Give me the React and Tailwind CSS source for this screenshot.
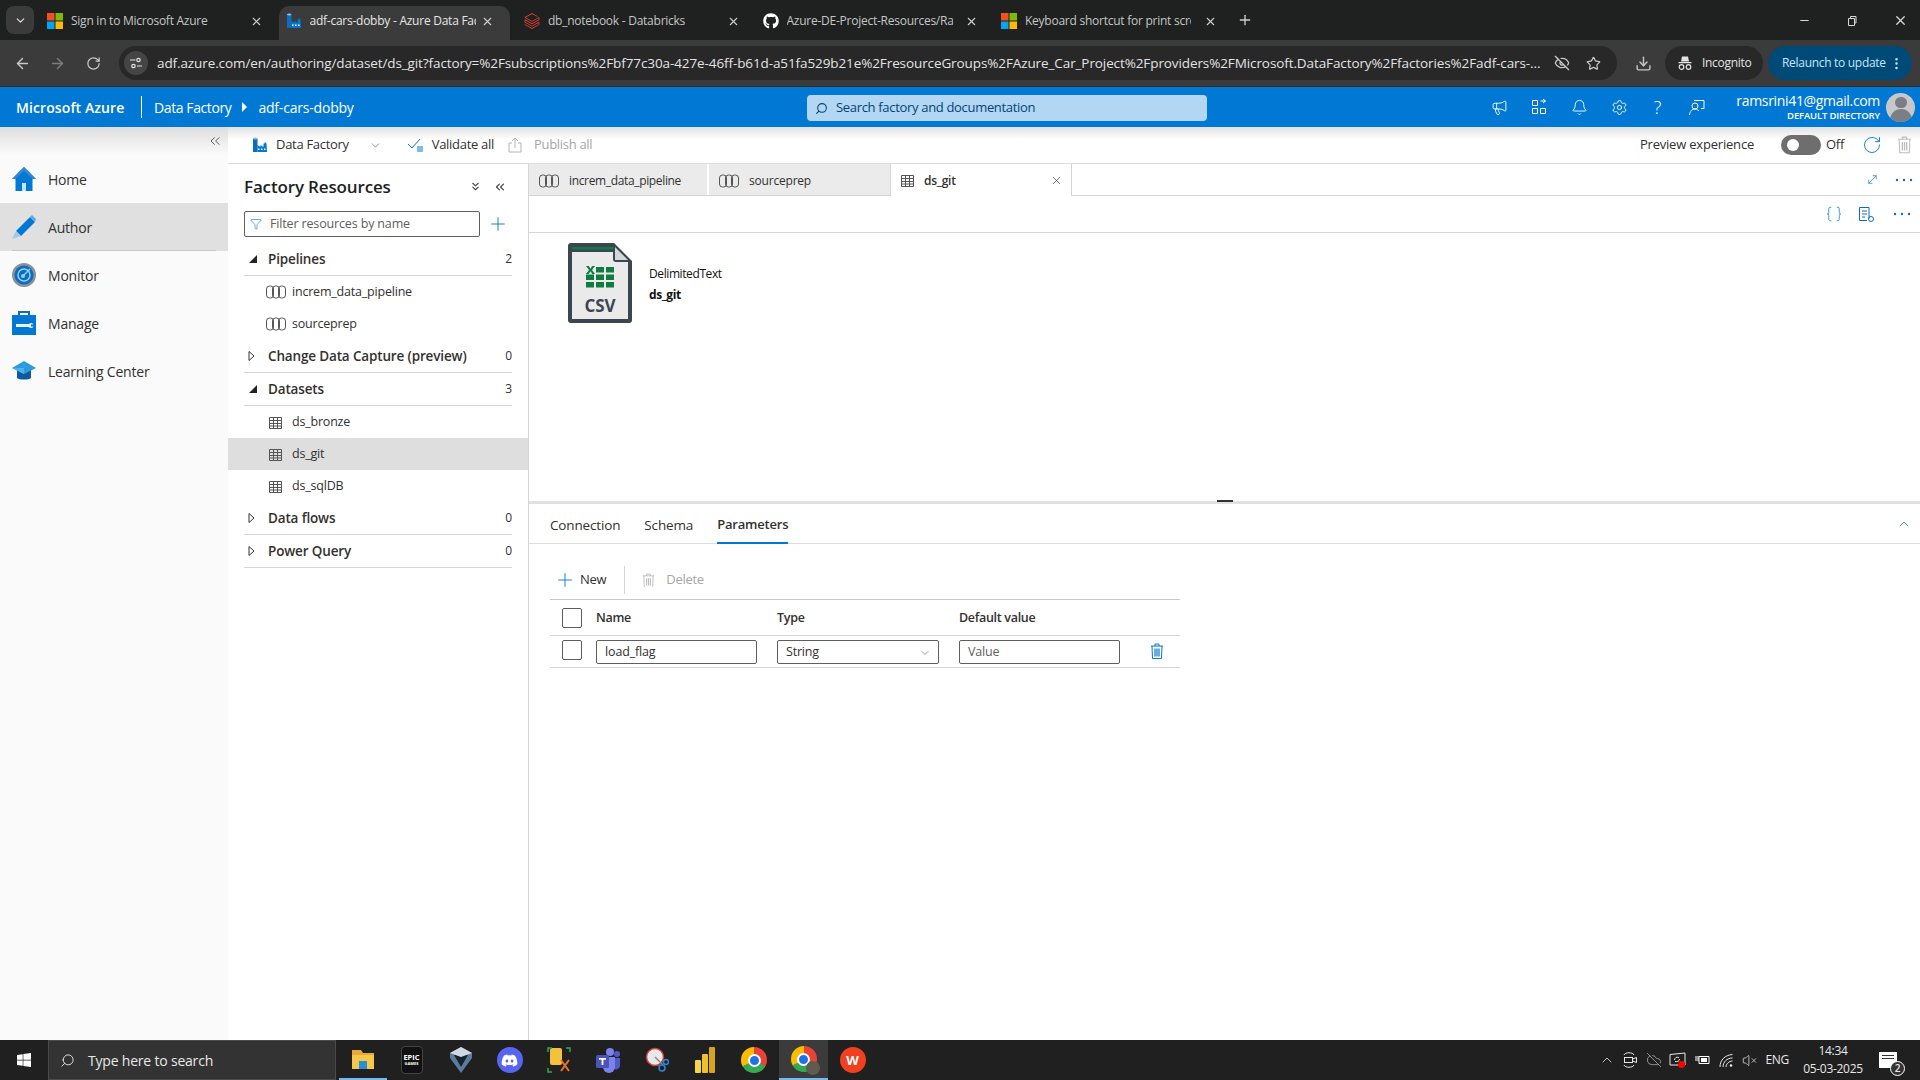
import { ArrowLeft, ArrowRight, RotateCw, EyeOff, Star, Download, Plus, X, Minus, ChevronDown, ChevronUp, ChevronsLeft, ChevronsDown, Bell, Settings, Megaphone, Filter, MoveDiagonal, EllipsisVertical, Search, Braces, VolumeX, CloudOff } from "lucide-react";
import { FaGithub, FaDiscord, FaWindows } from "react-icons/fa";
import { SiDatabricks } from "react-icons/si";

const ui = "font-['Open_Sans','Noto_Sans',sans-serif]";

function MsLogo() {
  return (
    <svg width="16" height="16" viewBox="0 0 16 16" className="shrink-0">
      <rect width="7.5" height="7.5" fill="#f25022" />
      <rect x="8.5" width="7.5" height="7.5" fill="#7fba00" />
      <rect y="8.5" width="7.5" height="7.5" fill="#00a4ef" />
      <rect x="8.5" y="8.5" width="7.5" height="7.5" fill="#ffb900" />
    </svg>
  );
}

function FactoryIcon({ size = 16 }) {
  return (
    <svg width={size} height={size} viewBox="0 0 16 16" className="shrink-0">
      <rect x="1" y="1.5" width="4.5" height="13.5" fill="#0f6cbd" />
      <ellipse cx="3.2" cy="1.6" rx="2.2" ry="1" fill="#7fc4ee" />
      <path d="M5.5 15V8l3 2V8l3 2V6.5h1L13 5l1.5 1.5L15 15z" fill="#0078d4" />
      <rect x="6" y="11.5" width="1.5" height="1.5" fill="#fff" />
      <rect x="9" y="11.5" width="1.5" height="1.5" fill="#fff" />
      <rect x="12" y="11.5" width="1.5" height="1.5" fill="#fff" />
    </svg>
  );
}

function Dots({ className = "" }) {
  return (
    <svg width="18" height="4" viewBox="0 0 18 4" fill="#0f6cbd" className={`shrink-0 ${className}`}>
      <circle cx="2" cy="2" r="1.200" />
      <circle cx="9" cy="2" r="1.200" />
      <circle cx="16" cy="2" r="1.200" />
    </svg>
  );
}

function ChromeTab({ icon, title, active }) {
  return (
    <div className={`h-[34px] shrink-0 flex items-center pl-[7px] pr-[16px] pb-[4px] rounded-t-[10px] ${active ? "bg-[#3b3b3b] w-[231px] mr-[7.5px]" : "w-[238.5px]"}`}>
      <div className="w-4 h-4 flex items-center justify-center shrink-0">{icon}</div>
      <span className={`ml-2 text-[12px] leading-4 w-[166px] overflow-hidden whitespace-nowrap tracking-[-0.25px] ${active ? "text-[#e6e6e6]" : "text-[#c4c7c5]"}`}>{title}</span>
      <X size={13} className="ml-auto text-[#d0d0d0]" />
    </div>
  );
}

function TabStrip() {
  return (
    <div className="h-10 bg-[#1f2020] flex items-end shrink-0">
      <div className="w-[28px] h-[28px] ml-[6px] mr-[6px] mb-[6px] rounded-lg bg-[#3b3b3b] flex items-center justify-center">
        <ChevronDown size={13} className="text-[#e3e3e3]" />
      </div>
      <ChromeTab icon={<MsLogo />} title="Sign in to Microsoft Azure" />
      <ChromeTab icon={<FactoryIcon />} title="adf-cars-dobby - Azure Data Factory" active />
      <ChromeTab icon={<SiDatabricks size={16} color="#e8432e" />} title="db_notebook - Databricks" />
      <ChromeTab icon={<FaGithub size={16} color="#fff" />} title="Azure-DE-Project-Resources/Raw" />
      <ChromeTab icon={<MsLogo />} title="Keyboard shortcut for print screen" />
      <Plus size={16} className="text-[#d0d0d0] mb-[12px] ml-[4px]" />
      <div className="ml-auto flex items-center mb-[12px] text-[#d8d8d8]">
        <Minus size={13} />
        <svg width="12" height="12" viewBox="0 0 12 12" className="ml-[35px]" fill="none" stroke="currentColor">
          <path d="M2.5 3.5h6v7h-6zM4.5 3.5v-2h5.5v6.500H8.500" />
        </svg>
        <X size={15} className="ml-[35px] mr-[12px]" />
      </div>
    </div>
  );
}

function Omnibox() {
  return (
    <div className="h-[47px] bg-[#3b3b3b] flex items-center shrink-0 border-b border-[#2d2d2d] text-[#c7c7c7]">
      <ArrowLeft size={17} className="ml-[14px]" />
      <ArrowRight size={17} className="ml-[18px] text-[#7e7e7e]" />
      <RotateCw size={15} className="ml-[20px]" />
      <div className="ml-[18px] w-[1498px] h-[34px] rounded-full bg-[#282828] flex items-center pl-[5px]">
        <div className="w-6 h-6 rounded-full bg-[#454545] flex items-center justify-center">
          <svg width="12" height="12" viewBox="0 0 12 12" fill="none" stroke="#e3e3e3" strokeWidth="1.200">
            <path d="M0 3h5.500M7 9h5" />
            <circle cx="8.500" cy="3" r="1.700" />
            <circle cx="3.500" cy="9" r="1.700" />
          </svg>
        </div>
        <span className="ml-[9px] w-[1383px] overflow-hidden whitespace-nowrap text-[13.5px] tracking-[-0.1px] text-[#e3e3e3]">adf.azure.com/en/authoring/dataset/ds_git?factory=%2Fsubscriptions%2Fbf77c30a-427e-46ff-b61d-a51fa529b21e%2FresourceGroups%2FAzure_Car_Project%2Fproviders%2FMicrosoft.DataFactory%2Ffactories%2Fadf-cars-...</span>
        <EyeOff size={16} className="ml-[14px]" />
        <Star size={15} className="ml-[16px]" />
      </div>
      <Download size={17} className="ml-[18px]" />
      <div className="ml-[13px] w-[98px] h-[34px] rounded-full bg-[#282828] flex items-center pl-3 text-[#e3e3e3]">
        <svg width="16" height="16" viewBox="0 0 16 16" fill="currentColor">
          <path d="M5 1.500h6l1 5H4zM1.500 7h13v1.200h-13z" />
          <circle cx="4.500" cy="12" r="2.300" fill="none" stroke="currentColor" strokeWidth="1.200" />
          <circle cx="11.500" cy="12" r="2.300" fill="none" stroke="currentColor" strokeWidth="1.200" />
        </svg>
        <span className="ml-[9px] text-[12px] tracking-[-0.3px]">Incognito</span>
      </div>
      <div className="ml-[5px] w-[144px] h-[34px] rounded-full bg-[#004a77] flex items-center pl-[14px] text-[#c2e7ff]">
        <span className="text-[12px] whitespace-nowrap tracking-[-0.3px]">Relaunch to update</span>
        <EllipsisVertical size={15} className="ml-[3px]" />
      </div>
    </div>
  );
}

function AzureHeader() {
  return (
    <div className="h-10 bg-[#0078d4] flex items-center text-white shrink-0">
      <div className="w-[807px] flex items-center shrink-0">
        <span className="ml-4 w-[125px] text-[14px] font-semibold tracking-[0.1px] whitespace-nowrap">Microsoft Azure</span>
        <div className="w-px h-[22px] bg-white" />
        <span className="ml-3 text-[14px] tracking-[-0.4px]">Data Factory</span>
        <svg width="6" height="10" viewBox="0 0 6 10" className="ml-[10px]" fill="#fff"><path d="M1 0l5 5-5 5z" /></svg>
        <span className="ml-[11px] text-[14px] tracking-[-0.2px] whitespace-nowrap">adf-cars-dobby</span>
      </div>
      <div className="mt-[2px] w-[400px] h-[26px] rounded-sm bg-[#b3d6f2] flex items-center pl-2 text-[#004578]">
        <Search size={13} className="-scale-x-100" />
        <span className="ml-2 text-[13px] tracking-[-0.32px]">Search factory and documentation</span>
      </div>
      <div className="ml-auto flex items-center">
        <Megaphone size={17} strokeWidth={1.300} />
        <svg width="18" height="18" viewBox="0 0 18 18" fill="none" stroke="#fff" className="ml-[22px]">
          <path d="M2.500 2.500h5v5h-5zM2.500 10.500h5v5h-5zM10.500 10.500h5v5h-5zM10.500 3h5M13 1l2.500 2L13 5" />
        </svg>
        <Bell size={17} strokeWidth={1.300} className="ml-[23px]" />
        <Settings size={17} strokeWidth={1.300} className="ml-[23px]" />
        <span className="ml-[26px] text-[18px] font-light">?</span>
        <svg width="18" height="18" viewBox="0 0 18 18" fill="none" stroke="#fff" className="ml-[27px]">
          <circle cx="7" cy="8" r="3" />
          <path d="M1.500 17c.5-4 2.500-6 5.500-6 2 0 3 1 4 2M6 2.500h10v8h-3" />
        </svg>
        <div className="ml-[30px] flex flex-col items-end">
          <span className="text-[14px] leading-[18px] tracking-[-0.33px]">ramsrini41@gmail.com</span>
          <span className="text-[9.500px] leading-[12px] font-semibold tracking-[-0.15px]">DEFAULT DIRECTORY</span>
        </div>
        <div className="ml-[6px] mr-[5px] w-[29px] h-[29px] rounded-full bg-[#c8c8c8] overflow-hidden flex flex-col items-center">
          <div className="w-[12px] h-[12px] rounded-full bg-[#7a7f85] mt-[4px]" />
          <div className="w-[22px] h-[14px] rounded-t-full bg-[#7a7f85] mt-[1px]" />
        </div>
      </div>
    </div>
  );
}

function HomeIcon() {
  return (
    <svg width="24" height="24" viewBox="0 0 24 24">
      <path d="M12 0L0 12h3.500v12h6.500v-8h4v8h6.500V12H24z" fill="#0078d4" />
      <path d="M12 0l12 12h-3.500L12 4 3.500 12H0z" fill="#2b88d8" />
      <rect x="10" y="16" width="4" height="8" fill="#c7e0f4" />
    </svg>
  );
}

function AuthorIcon() {
  return (
    <svg width="24" height="24" viewBox="0 0 24 24">
      <path d="M4 16L18 2l5 5L9 21z" fill="#0078d4" />
      <path d="M18 2l2-2 4 4-1 3z" fill="#5ea9de" />
      <path d="M4 16l5 5-9 3z" fill="#9ccbea" />
    </svg>
  );
}

function MonitorIcon() {
  return (
    <svg width="24" height="24" viewBox="0 0 24 24">
      <circle cx="12" cy="12" r="12" fill="#8a9199" />
      <circle cx="12" cy="12" r="9.500" fill="#0f6cbd" />
      <circle cx="12" cy="12" r="6" fill="none" stroke="#8fd0f5" strokeWidth="1.500" />
      <circle cx="11" cy="13" r="2" fill="#8fd0f5" />
      <path d="M11 13l7-7" stroke="#8fd0f5" strokeWidth="1.500" />
    </svg>
  );
}

function ManageIcon() {
  return (
    <svg width="24" height="24" viewBox="0 0 24 24">
      <path d="M6 5V0h12v5h-2V2H8v3z" fill="#0f6cbd" />
      <rect y="4" width="24" height="20" fill="#0078d4" />
      <rect x="4" y="13" width="14" height="3" fill="#e8f3fb" />
      <circle cx="19" cy="14.500" r="2.500" fill="#e8f3fb" />
      <rect x="19" y="13.500" width="4" height="2" fill="#0078d4" />
    </svg>
  );
}

function LearnIcon() {
  return (
    <svg width="24" height="20" viewBox="0 0 24 20">
      <path d="M5 9v8c2 2 12 2 14 0V9z" fill="#0f5a9c" />
      <path d="M12 0L0 7l12 6 12-6z" fill="#2b9ae0" />
      <path d="M0 7l12 6V7z" fill="#50b0ea" />
    </svg>
  );
}

const navItems = [
  { label: "Home", icon: <HomeIcon /> },
  { label: "Author", icon: <AuthorIcon />, active: true },
  { label: "Monitor", icon: <MonitorIcon /> },
  { label: "Manage", icon: <ManageIcon /> },
  { label: "Learning Center", icon: <LearnIcon /> },
];

function Sidebar() {
  return (
    <div className="w-[228px] shrink-0 bg-linear-to-b from-[#dedede] via-[#fafafa] via-[3%] to-[#fafafa] flex flex-col">
      <div className="h-[28px] pt-[4px] flex justify-end pr-[5px] text-[#444]">
        <ChevronsLeft size={16} strokeWidth={1.300} className="mt-[2px]" />
      </div>
      {navItems.map((item) => (
        <div key={item.label} className={`h-[48px] pl-3 flex items-center relative ${item.active ? "bg-[#e0e0e0]" : ""}`}>
          <div className="w-6 flex justify-center">{item.icon}</div>
          <span className="ml-3 text-[14px] font-medium text-[#323130] tracking-[-0.2px]">{item.label}</span>
          {item.active && <div className="absolute left-3 right-3 bottom-0 h-px bg-[#c8c8c8]" />}
        </div>
      ))}
    </div>
  );
}

function TrashIcon({ color, size = 14 }) {
  return (
    <svg width={size} height={size * 1.150} viewBox="0 0 14 16" fill="none" stroke={color} strokeWidth="1" className="shrink-0">
      <path d="M1 3h12M5 3V1h4v2M2 3l.5 12.500h9L12 3" />
      <path d="M5 5.500v8M7 5.500v8M9 5.500v8" strokeWidth="1.200" />
    </svg>
  );
}

function CommandBar() {
  return (
    <div className="h-[37px] shrink-0 border-b border-[#dcdcdc] bg-linear-to-b from-[#e2e2e2] via-white via-[35%] to-white flex items-center pl-[24px] pr-[8px]">
      <FactoryIcon size={16} />
      <span className="ml-2 text-[13px] text-[#323130] tracking-[-0.3px]">Data Factory</span>
      <ChevronDown size={13} strokeWidth={1.200} className="ml-[20px] text-[#555]" />
      <svg width="16" height="14" viewBox="0 0 16 14" fill="none" stroke="#0078d4" className="ml-[26px]">
        <path d="M0 6l4 4 8-9M9 9h6M9 11h6M9 13h6" />
      </svg>
      <span className="ml-2 text-[13px] text-[#323130] tracking-[-0.3px]">Validate all</span>
      <svg width="14" height="16" viewBox="0 0 14 16" fill="none" stroke="#b5b5b5" className="ml-[14px]">
        <path d="M4 6H1v9h12V6h-3M7 11V1M4 4l3-3 3 3" />
      </svg>
      <span className="ml-3 text-[13px] text-[#a6a6a6] tracking-[-0.3px]">Publish all</span>
      <span className="ml-auto text-[13px] font-medium text-[#323130] tracking-[-0.2px]">Preview experience</span>
      <div className="ml-[27px] w-10 h-5 rounded-full bg-[#6e6e6e] flex items-center pl-[6px]">
        <div className="w-3 h-3 rounded-full bg-white" />
      </div>
      <span className="ml-[5px] text-[13px] text-[#323130] tracking-[-0.3px]">Off</span>
      <RotateCw size={20} strokeWidth={1.100} className="ml-[18px] mr-[15px] text-[#0078d4]" />
      <TrashIcon color="#bdbdbd" size={15} />
    </div>
  );
}

function PipelineIcon() {
  return (
    <svg width="20" height="14" viewBox="0 0 20 14" fill="none" stroke="#444" strokeWidth="0.900" className="shrink-0">
      <rect x="0.500" y="1" width="7" height="12" rx="3" />
      <rect x="6.500" y="1" width="7" height="12" rx="3" />
      <rect x="12.500" y="1" width="7" height="12" rx="3" />
    </svg>
  );
}

function TableIcon() {
  return (
    <svg width="15" height="15" viewBox="0 0 15 15" fill="none" stroke="#555" className="shrink-0">
      <path d="M1.500 2.500h12v11h-12zM1.500 5.500h12M1.500 8.500h12M1.500 11h12M5.500 2.500v11M9.500 2.500v11" />
    </svg>
  );
}

function Caret({ open }) {
  return open ? (
    <svg width="8" height="8" viewBox="0 0 8 8" className="ml-[5px]"><path d="M8 0v8H0z" fill="#222" /></svg>
  ) : (
    <svg width="7" height="10" viewBox="0 0 7 10" className="ml-[4px]" fill="none" stroke="#333"><path d="M1 .5l5 4.500-5 4.500z" /></svg>
  );
}

function SectionRow({ label, count, open }) {
  return (
    <div className="h-[33px] ml-[16px] w-[268px] border-b border-[#d6d6d6] flex items-center">
      <div className="w-6 flex items-center"><Caret open={open} /></div>
      <span className="text-[13.5px] font-semibold text-[#323130] tracking-[-0.15px] whitespace-nowrap">{label}</span>
      <span className="ml-auto text-[12px] text-[#323130]">{count}</span>
    </div>
  );
}

function TreeItem({ label, kind, selected }) {
  return (
    <div className={`h-8 flex items-center ${kind === "pipeline" ? "pl-[38px]" : "pl-[40px]"} ${selected ? "bg-[#dedede]" : ""}`}>
      {kind === "pipeline" ? <PipelineIcon /> : <TableIcon />}
      <span className={`${kind === "pipeline" ? "ml-[6px]" : "ml-[9px]"} text-[12.500px] text-[#323130] tracking-[-0.2px]`}>{label}</span>
    </div>
  );
}

function ResourcesPanel() {
  return (
    <div className="w-[301px] shrink-0 border-r border-[#d6d6d6] flex flex-col">
      <div className="h-[47px] pl-[16px] pr-[21px] pb-[2px] flex items-center text-[#444]">
        <span className="text-[17px] font-semibold text-[#201f1e] tracking-[-0.15px] whitespace-nowrap">Factory Resources</span>
        <ChevronsDown size={13} className="ml-auto" />
        <ChevronsLeft size={14} className="ml-[11px]" />
      </div>
      <div className="h-[26px] flex items-center pl-[16px]">
        <div className="w-[236px] h-[26px] border border-[#605e5c] rounded-[2px] flex items-center pl-[5px]">
          <Filter size={12} strokeWidth={1.200} className="text-[#0078d4]" />
          <span className="ml-2 text-[12.500px] text-[#605e5c] tracking-[-0.15px]">Filter resources by name</span>
        </div>
        <Plus size={22} strokeWidth={1} className="ml-[7px] text-[#0078d4]" />
      </div>
      <div className="h-[6px]" />
      <SectionRow label="Pipelines" count="2" open />
      <TreeItem label="increm_data_pipeline" kind="pipeline" />
      <TreeItem label="sourceprep" kind="pipeline" />
      <SectionRow label="Change Data Capture (preview)" count="0" />
      <SectionRow label="Datasets" count="3" open />
      <TreeItem label="ds_bronze" kind="table" />
      <TreeItem label="ds_git" kind="table" selected />
      <TreeItem label="ds_sqlDB" kind="table" />
      <SectionRow label="Data flows" count="0" />
      <SectionRow label="Power Query" count="0" />
    </div>
  );
}

function EditorTabs() {
  return (
    <div className="h-[32px] shrink-0 flex border-b border-[#d6d6d6]">
      <div className="w-[180px] bg-[#ebebeb] flex items-center pl-[10px] pt-[2px] border-r-2 border-white">
        <PipelineIcon />
        <span className="ml-[10px] text-[12px] text-[#323130] tracking-[-0.35px]">increm_data_pipeline</span>
      </div>
      <div className="w-[181px] bg-[#ebebeb] flex items-center pl-[10px] pt-[2px]">
        <PipelineIcon />
        <span className="ml-[10px] text-[12px] text-[#323130] tracking-[-0.2px]">sourceprep</span>
      </div>
      <div className="w-[182px] h-[32px] bg-white border-x border-[#d6d6d6] flex items-center pl-[9px] pr-[8px] pt-[1px]">
        <TableIcon />
        <span className="ml-[9px] text-[12px] font-semibold text-[#323130] tracking-[-0.25px]">ds_git</span>
        <X size={13} strokeWidth={1.200} className="ml-auto text-[#333]" />
      </div>
      <div className="ml-auto flex items-center pr-[7px] text-[#0078d4]">
        <MoveDiagonal size={13} strokeWidth={1.200} />
        <Dots className="ml-[16px]" />
      </div>
    </div>
  );
}

function CsvIcon() {
  return (
    <svg width="64" height="80" viewBox="0 0 64 80" className="shrink-0">
      <path d="M3 0h43l18 18v59a3 3 0 0 1-3 3H3a3 3 0 0 1-3-3V3a3 3 0 0 1 3-3z" fill="#3b4650" />
      <path d="M4 9h41v7q0 3 3 3h12v57H4z" fill="#eaeaea" />
      <rect x="4" y="4" width="42" height="2.500" fill="#107c41" />
      <path d="M47 4l13 13H47z" fill="#d2d7dc" />
      <g fill="#107c41">
        <rect x="28" y="24" width="8" height="5.500" /><rect x="38" y="24" width="8" height="5.500" />
        <rect x="18" y="31.500" width="8" height="5.500" /><rect x="28" y="31.500" width="8" height="5.500" /><rect x="38" y="31.500" width="8" height="5.500" />
        <rect x="18" y="39" width="8" height="5.500" /><rect x="28" y="39" width="8" height="5.500" /><rect x="38" y="39" width="8" height="5.500" />
        <path d="M18 23h2.800l1.700 2.700 1.700-2.700H27l-3 4 3 4h-2.800l-1.700-2.800-1.700 2.800H18l3-4z" />
      </g>
      <text x="32" y="69" textAnchor="middle" fontSize="17" fontWeight="700" fill="#3b4650" fontFamily="Open Sans">CSV</text>
    </svg>
  );
}

function CheckBox({ className = "" }) {
  return <div className={`w-5 h-5 border border-[#605e5c] rounded-[2px] bg-white shrink-0 ${className}`} />;
}

function ParamTable() {
  return (
    <div className="w-[630px] ml-[21px] text-[13px] text-[#323130]">
      <div className="h-[36px] border-t border-[#c8c8c8] flex items-center pl-3 font-semibold tracking-[-0.3px]">
        <CheckBox />
        <span className="ml-[14px] w-[181px] pt-[1px] text-[12.500px]">Name</span>
        <span className="w-[182px] pt-[1px] text-[12.500px]">Type</span>
        <span className="pt-[1px] text-[12.500px]">Default value</span>
      </div>
      <div className="h-[33px] border-y border-[#d6d6d6] flex items-center pl-3">
        <CheckBox className="-mt-[3px]" />
        <div className="ml-[14px] w-[161px] h-[24px] border border-[#605e5c] rounded-[2px] flex items-center pl-2 pt-[2px] text-[12.500px] tracking-[-0.15px]">load_flag</div>
        <div className="ml-[20px] w-[162px] h-[24px] border border-[#605e5c] rounded-[2px] flex items-center pl-2 pr-[7px] pt-[2px] text-[12.500px] tracking-[-0.2px]">
          String
          <ChevronDown size={12} strokeWidth={1.200} className="ml-auto text-[#555]" />
        </div>
        <div className="ml-[20px] w-[161px] h-[24px] border border-[#605e5c] rounded-[2px] flex items-center pl-2 pt-[2px] text-[12.500px] text-[#605e5c] tracking-[-0.2px]">Value</div>
        <div className="ml-[30px]"><TrashIcon color="#0078d4" size={14} /></div>
      </div>
    </div>
  );
}

function Editor() {
  return (
    <div className="flex-1 min-w-0 flex flex-col">
      <EditorTabs />
      <div className="h-[37px] shrink-0 border-b border-[#d6d6d6] flex items-center justify-end pr-[9px] text-[#0078d4]">
        <Braces size={18} strokeWidth={1} />
        <svg width="17" height="17" viewBox="0 0 17 17" fill="none" stroke="#0f6cbd" className="ml-[15px]">
          <path d="M11 12.500V1.500H1.500v13H9M4 5h5M4 8h5M4 11h3" />
          <circle cx="13" cy="13" r="2.500" />
        </svg>
        <Dots className="ml-[18px]" />
      </div>
      <div className="h-[268px] shrink-0 pl-[39px] pt-[10px] flex items-start">
        <CsvIcon />
        <div className="ml-[17px] mt-[21px] text-[12px] text-[#111] tracking-[-0.4px]">
          <div className="leading-5">DelimitedText</div>
          <div className="font-bold mt-[1px] leading-5">ds_git</div>
        </div>
      </div>
      <div className="h-[3px] bg-[#e1e1e1] shrink-0 relative">
        <div className="absolute left-[688px] top-[-1px] w-[16px] h-[2px] bg-[#333]" />
      </div>
      <div className="h-[40px] shrink-0 border-b border-[#dcdcdc] flex items-stretch pl-[21px] pr-[8px] text-[13.5px] text-[#323130] tracking-[-0.15px]">
        <div className="flex items-center pt-[3px]">Connection</div>
        <div className="flex items-center pt-[3px] ml-[24px]">Schema</div>
        <div className="flex items-center pt-[3px] ml-[24px] text-[13px] tracking-[-0.2px] font-semibold border-b-2 border-[#0078d4] mb-[-1px]">Parameters</div>
        <ChevronUp size={16} strokeWidth={1.200} className="ml-auto self-center text-[#0078d4]" />
      </div>
      <div className="h-[55px] shrink-0 flex items-center pl-[25px] pt-[17px] pb-0 text-[13px] tracking-[-0.3px]">
        <Plus size={22} strokeWidth={1} className="text-[#0078d4]" />
        <span className="ml-[4px] text-[#323130]">New</span>
        <div className="ml-[18px] w-px h-7 bg-[#d6d6d6]" />
        <div className="ml-[17px]"><TrashIcon color="#bdbdbd" size={13} /></div>
        <span className="ml-[11px] text-[#a6a6a6]">Delete</span>
      </div>
      <ParamTable />
    </div>
  );
}

function ChromeLogo({ badge }) {
  return (
    <div className="w-[26px] h-[26px] rounded-full bg-[conic-gradient(#ea4335_0_120deg,#34a853_120deg_240deg,#fbbc04_240deg_360deg)] flex items-center justify-center relative">
      <div className="w-[13px] h-[13px] rounded-full bg-[#1a73e8] border-2 border-white" />
      {badge && <div className="absolute -right-[3px] -bottom-[3px] w-[14px] h-[14px] rounded-full bg-[#5f5a52]" />}
    </div>
  );
}

function TeamsIcon() {
  return (
    <svg width="26" height="26" viewBox="0 0 26 26">
      <circle cx="15" cy="5" r="4" fill="#7b83eb" />
      <circle cx="22" cy="7" r="3" fill="#5059c9" />
      <path d="M18 11h7v8a4 4 0 0 1-7 2z" fill="#5059c9" />
      <path d="M8 10h12v10a6 6 0 0 1-12 0z" fill="#7b83eb" />
      <rect x="1" y="8" width="13" height="13" rx="1.500" fill="#4b53bc" />
      <path d="M4 11h7v1.800H8.400V18H6.600v-5.200H4z" fill="#fff" />
    </svg>
  );
}

function TaskbarIcons() {
  return (
    <div className="flex items-stretch h-10">
      <div className="w-[48px] ml-[2px] flex items-center justify-center border-b-2 border-[#76b9ed]">
        <svg width="24" height="24" viewBox="0 0 24 24">
          <path d="M1 3h9l2 3h11v3H1z" fill="#e6a93a" />
          <rect x="1" y="8" width="22" height="14" fill="#f5c84c" />
          <rect x="8" y="14" width="8" height="8" fill="#2a8fd8" />
        </svg>
      </div>
      <div className="w-[49px] flex items-center justify-center">
        <div className="w-[22px] h-[28px] bg-[#111] border border-[#444] rounded-sm flex flex-col items-center justify-center text-white leading-none font-bold">
          <span className="text-[7.500px]">EPIC</span>
          <span className="text-[4px] mt-[1px]">GAMES</span>
        </div>
      </div>
      <div className="w-[49px] flex items-center justify-center">
        <svg width="24" height="28" viewBox="0 0 24 28">
          <path d="M12 1l11 6v5L12 27 1 12V7z" fill="#5c7c9e" />
          <path d="M12 6L5 9l7 12 7-12z" fill="#16222e" />
          <path d="M12 1L1 7l11 4 11-4z" fill="#cfd9e3" />
        </svg>
      </div>
      <div className="w-[49px] flex items-center justify-center">
        <div className="w-[26px] h-[26px] rounded-full bg-[#5865f2] flex items-center justify-center">
          <FaDiscord size={17} color="#fff" />
        </div>
      </div>
      <div className="w-[49px] flex items-center justify-center">
        <svg width="24" height="26" viewBox="0 0 24 26" fill="none">
          <rect x="3" y="1" width="12" height="17" rx="2" fill="#f3c23c" />
          <path d="M1 5V1h4M19 1h4v4M1 21v4h4" stroke="#2fa84f" strokeWidth="1.500" />
          <path d="M14 13l8 11M22 13l-8 11" stroke="#e8742a" strokeWidth="2" />
        </svg>
      </div>
      <div className="w-[49px] flex items-center justify-center">
        <TeamsIcon />
      </div>
      <div className="w-[49px] flex items-center justify-center">
        <svg width="24" height="26" viewBox="0 0 24 26" fill="none">
          <circle cx="10" cy="10" r="8.500" fill="#e8e8e8" stroke="#c8453f" strokeWidth="1.500" />
          <path d="M10 10l8 8" stroke="#888" strokeWidth="1.500" />
          <circle cx="17" cy="21" r="3" stroke="#2b88d8" strokeWidth="1.500" />
          <circle cx="21" cy="15" r="2.500" stroke="#2b88d8" strokeWidth="1.500" />
        </svg>
      </div>
      <div className="w-[48px] flex items-center justify-center">
        <svg width="20" height="26" viewBox="0 0 20 26">
          <rect x="0" y="13" width="6" height="13" rx="1" fill="#f6d44b" />
          <rect x="7" y="7" width="6" height="19" rx="1" fill="#edc02f" />
          <rect x="14" y="0" width="6" height="26" rx="1" fill="#d9a31e" />
        </svg>
      </div>
      <div className="w-[50px] flex items-center justify-center"><ChromeLogo /></div>
      <div className="w-[49px] flex items-center justify-center bg-[#3b3b3b] border-b-2 border-[#76b9ed]"><ChromeLogo badge /></div>
      <div className="w-[49px] flex items-center justify-center">
        <div className="w-[26px] h-[26px] rounded-full bg-[#f0401f] flex items-center justify-center text-white font-bold text-[13px] leading-none">W</div>
      </div>
    </div>
  );
}

function Taskbar() {
  return (
    <div className="h-10 shrink-0 bg-[#202020] flex items-center text-white">
      <FaWindows size={16} className="ml-4" />
      <div className="ml-[16px] w-[288px] h-[40px] bg-[#333] border border-[#4a4a4a] flex items-center pl-[11px]">
        <Search size={15} strokeWidth={1.300} className="-scale-x-100" />
        <span className="ml-[13px] text-[14px] text-[#e8e8e8] tracking-[-0.2px]">Type here to search</span>
      </div>
      <div className="ml-[1px]"><TaskbarIcons /></div>
      <div className="ml-auto flex items-center text-[#e8e8e8]">
        <ChevronUp size={16} strokeWidth={1.200} />
        <svg width="14" height="18" viewBox="0 0 14 18" fill="none" stroke="#e8e8e8" className="ml-[8px]">
          <path d="M1 4c1-3 9-3 10 0M1 14c1 3 9 3 10 0" />
          <rect x="1.500" y="6.500" width="8" height="5" />
          <path d="M9.500 8l4-1.500v5L9.500 10" />
        </svg>
        <CloudOff size={16} strokeWidth={1.200} className="ml-[9px] text-[#aaa]" />
        <svg width="17" height="16" viewBox="0 0 17 16" fill="none" stroke="#e8e8e8" className="ml-[7px]">
          <path d="M1 2.500l15-1.500v12H1z" />
          <path d="M5.500 8c0-2 2-3.500 4.500-2.500M10.500 7c0 2-2 3-4.500 2.500" />
          <circle cx="12.500" cy="12.500" r="3.500" fill="#f00" stroke="none" />
        </svg>
        <svg width="16" height="12" viewBox="0 0 16 12" fill="none" stroke="#fff" className="ml-[8px]">
          <path d="M5 2.500h10v7H5zM1 6h4M2 2v3M4 2v3" />
          <rect x="7" y="4" width="6" height="4" fill="#fff" stroke="none" />
        </svg>
        <svg width="15" height="15" viewBox="0 0 15 15" fill="none" stroke="#e8e8e8" className="ml-[9px]">
          <path d="M1 14C1 7 6 2 13.500 1.500M4 14c0-5 4-9 9.500-9M7 14c0-3 3-6 6.500-6" />
          <circle cx="12" cy="12.500" r="1.300" fill="#e8e8e8" stroke="none" />
        </svg>
        <VolumeX size={15} strokeWidth={1.200} className="ml-[8px]" />
        <span className="ml-[8px] text-[12px] tracking-[-0.3px]">ENG</span>
        <div className="ml-[13px] w-[62px] flex flex-col items-center text-[12px] leading-[18px] tracking-[-0.3px]">
          <span>14:34</span>
          <span className="whitespace-nowrap">05-03-2025</span>
        </div>
        <div className="ml-[15px] mr-[23px] relative w-[18px] h-[16px] bg-white flex flex-col gap-[2px] pt-[3px] px-[3px]">
          <div className="h-px bg-[#333]" />
          <div className="h-px bg-[#333]" />
          <div className="absolute -right-[8px] -bottom-[8px] w-[15px] h-[15px] rounded-full bg-[#333] border border-white flex items-center justify-center text-[10px] font-semibold">2</div>
        </div>
      </div>
    </div>
  );
}

export default function App() {
  return (
    <div className={`w-[1920px] h-[1080px] overflow-hidden flex flex-col bg-white ${ui}`}>
      <TabStrip />
      <Omnibox />
      <AzureHeader />
      <div className="flex-1 min-h-0 flex">
        <Sidebar />
        <div className="flex-1 min-w-0 flex flex-col">
          <CommandBar />
          <div className="flex-1 min-h-0 flex">
            <ResourcesPanel />
            <Editor />
          </div>
        </div>
      </div>
      <Taskbar />
    </div>
  );
}
